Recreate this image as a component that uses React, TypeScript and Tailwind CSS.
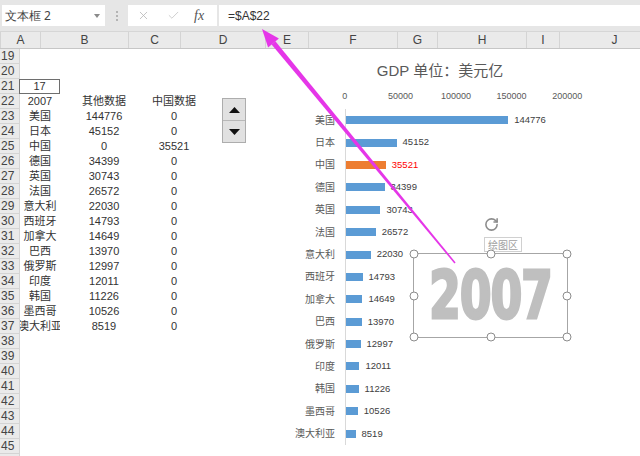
import { X, Check, RotateCw } from "lucide-react"

// column widths taken from the header separators
const cols = [
  { name: "A", w: "w-[40px]" },
  { name: "B", w: "w-[88px]" },
  { name: "C", w: "w-[52px]" },
  { name: "D", w: "w-[85px]" },
  { name: "E", w: "w-[43px]" },
  { name: "F", w: "w-[89px]" },
  { name: "G", w: "w-[40px]" },
  { name: "H", w: "w-[89px]" },
  { name: "I", w: "w-[33px]" },
  { name: "J", w: "w-[110px]" },
]

const gdp: [string, number, number][] = [
  ["美国", 144776, 0],
  ["日本", 45152, 0],
  ["中国", 0, 35521],
  ["德国", 34399, 0],
  ["英国", 30743, 0],
  ["法国", 26572, 0],
  ["意大利", 22030, 0],
  ["西班牙", 14793, 0],
  ["加拿大", 14649, 0],
  ["巴西", 13970, 0],
  ["俄罗斯", 12997, 0],
  ["印度", 12011, 0],
  ["韩国", 11226, 0],
  ["墨西哥", 10526, 0],
  ["澳大利亚", 8519, 0],
]

type Row = { n: number; a?: string; b?: string; c?: string; boxed?: boolean }

const rows: Row[] = []
for (let n = 19; n <= 46; n++) {
  if (n === 21) rows.push({ n, a: "17", boxed: true })
  else if (n === 22) rows.push({ n, a: "2007", b: "其他数据", c: "中国数据" })
  else if (n >= 23 && n <= 37) {
    const [name, other, cn] = gdp[n - 23]
    rows.push({ n, a: name, b: String(other), c: String(cn) })
  } else rows.push({ n })
}

function Toolbar() {
  return (
    <div className="flex h-[32px] items-center bg-[#e6e6e6] pl-[2px] border-b border-[#d6d6d6]">
      <div className="flex h-[21px] w-[103px] items-center bg-white pl-[3px] pr-[5px] text-[12px] text-[#444]">
        <span className="flex-1">文本框 2</span>
        <svg width="6" height="4" viewBox="0 0 6 4">
          <path d="M0 0 L6 0 L3 4 Z" fill="#8a8a8a" />
        </svg>
      </div>
      <div className="flex w-[23px] flex-col items-center gap-[2px]">
        <span className="h-[2px] w-[2px] bg-[#b4b4b4]" />
        <span className="h-[2px] w-[2px] bg-[#b4b4b4]" />
        <span className="h-[2px] w-[2px] bg-[#b4b4b4]" />
      </div>
      <div className="flex h-[21px] w-[89px] items-center bg-white">
        <X className="ml-[9px] h-[13px] w-[13px] text-[#b8b8b8]" strokeWidth={1.5} />
        <Check className="ml-[17px] h-[13px] w-[13px] text-[#c4c4c4]" strokeWidth={1.5} />
        <span className="ml-[14px] font-['Liberation_Serif',serif] text-[14px] italic text-[#555]">fx</span>
      </div>
      <div className="ml-[2px] flex h-[21px] flex-1 items-center bg-white pl-[9px] font-['Liberation_Sans',sans-serif] text-[12px] text-[#333]">
        =$A$22
      </div>
    </div>
  )
}

function Grid() {
  return (
    <div className="font-['Liberation_Sans','Noto_Sans_CJK_SC',sans-serif] text-[#333]">
      <div className="flex h-[17px] bg-[#eaeaea] border-b border-[#c6c6c6]">
        <div className="relative w-[20px] border-r border-[#d4d4d4]">
          <svg className="absolute bottom-[2px] right-[3px]" width="11" height="11" viewBox="0 0 11 11">
            <path d="M11 0 L11 11 L0 11 Z" fill="#bdbdbd" />
          </svg>
        </div>
        {cols.map((c) => (
          <div
            key={c.name}
            className={`${c.w} shrink-0 flex items-center justify-center border-r border-[#d4d4d4] text-[12px] text-[#444]`}
          >
            {c.name}
          </div>
        ))}
      </div>
      {rows.map((r) => (
        <div key={r.n} className="flex h-[15px]">
          <div className="w-[20px] shrink-0 bg-[#eaeaea] border-r border-b border-[#d4d4d4] pl-[1px] text-[12px] leading-[14px] text-[#444]">
            {r.n}
          </div>
          <div
            className={`w-[40px] shrink-0 overflow-hidden flex items-center justify-center whitespace-nowrap text-[11px] ${
              r.boxed ? "border border-[#6e6e6e] -ml-[1px] w-[41px]" : ""
            }`}
          >
            {r.a}
          </div>
          <div className="w-[88px] shrink-0 flex items-center justify-center text-[11px]">{r.b}</div>
          <div className="w-[52px] shrink-0 flex items-center justify-center text-[11px]">{r.c}</div>
          <div className="flex-1" />
        </div>
      ))}
    </div>
  )
}

function SpinButton() {
  return (
    <div className="absolute left-[222px] top-[98px] flex h-[45px] w-[24px] flex-col border border-[#adadad] bg-[#e1e1e1]">
      <div className="flex flex-1 items-center justify-center border-b border-[#b8b8b8]">
        <svg width="11" height="6" viewBox="0 0 11 6">
          <path d="M0 6 L5.5 0 L11 6 Z" fill="#111" />
        </svg>
      </div>
      <div className="flex flex-1 items-center justify-center">
        <svg width="11" height="6" viewBox="0 0 11 6">
          <path d="M0 0 L11 0 L5.5 6 Z" fill="#111" />
        </svg>
      </div>
    </div>
  )
}

function Chart() {
  const scale = 56 / 50000
  return (
    <div className="absolute left-[285px] top-[60px] w-[310px] font-['Liberation_Sans','Noto_Sans_CJK_SC',sans-serif]">
      <div className="h-[22px] text-center text-[15px] leading-[22px] text-[#595959]">GDP 单位：美元亿</div>
      <div className="mt-[8px] ml-[32px] flex h-[12px] text-[9px] leading-[12px] text-[#595959]">
        {["0", "50000", "100000", "150000", "200000"].map((t) => (
          <div key={t} className="w-[56px] text-center">
            {t}
          </div>
        ))}
      </div>
      <div className="mt-[7px] flex">
        <div className="w-[60px] shrink-0 pr-[10px]">
          {gdp.map(([name]) => (
            <div key={name} className="flex h-[22.4px] items-center justify-end whitespace-nowrap text-[10px] text-[#595959]">
              {name}
            </div>
          ))}
        </div>
        <div className="flex-1 border-l border-[#d9d9d9]">
          {gdp.map(([name, other, cn]) => {
            const v = other || cn
            const china = cn > 0
            return (
              <div key={name} className="flex h-[22.4px] items-center">
                <div
                  className={`h-[8px] ${china ? "bg-[#ed7d31]" : "bg-[#5b9bd5]"}`}
                  style={{ width: `${v * scale}px` }}
                />
                <span className={`ml-[6px] text-[9.5px] ${china ? "text-[#ff0000]" : "text-[#404040]"}`}>{v}</span>
              </div>
            )
          })}
        </div>
      </div>
    </div>
  )
}

function Handle({ className }: { className: string }) {
  return (
    <span
      className={`absolute h-[9px] w-[9px] -translate-x-1/2 -translate-y-1/2 rounded-full border-[1.5px] border-[#8c8c8c] bg-white ${className}`}
    />
  )
}

function TextBox() {
  return (
    <>
      <RotateCw className="absolute left-[484px] top-[217px] h-[15px] w-[15px] text-[#8c8c8c]" strokeWidth={2.5} />
      <div className="absolute left-[484px] top-[237px] flex h-[15px] w-[38px] items-center justify-center border border-[#d0d0d0] bg-white font-['Noto_Sans_CJK_SC',sans-serif] text-[10px] text-[#a0a0a0]">
        绘图区
      </div>
      <div className="absolute left-[413px] top-[253px] flex h-[85px] w-[155px] items-center justify-center border border-[#a6a6a6]">
        <span className="scale-x-[0.76] font-['Liberation_Sans_Narrow','DejaVu_Sans_Condensed',sans-serif] text-[66px] font-bold leading-none tracking-[-1px] text-[#bfbfbf] [-webkit-text-stroke:3px_#bfbfbf]">
          2007
        </span>
        <Handle className="left-0 top-0" />
        <Handle className="left-1/2 top-0" />
        <Handle className="left-full top-0" />
        <Handle className="left-0 top-1/2" />
        <Handle className="left-full top-1/2" />
        <Handle className="left-0 top-full" />
        <Handle className="left-1/2 top-full" />
        <Handle className="left-full top-full" />
      </div>
    </>
  )
}

function Arrow() {
  return (
    <svg className="pointer-events-none absolute left-0 top-0" width="640" height="456" viewBox="0 0 640 456">
      <polygon points="262,29 268.1,47.4 278.9,38.4" fill="#e536e8" />
      <polygon points="271.6,44.5 275.4,41.3 455.6,262.5 454.4,263.5" fill="#e536e8" />
    </svg>
  )
}

export default function App() {
  return (
    <div className="relative h-[456px] w-[640px] overflow-hidden bg-white">
      <Toolbar />
      <Grid />
      <SpinButton />
      <Chart />
      <TextBox />
      <Arrow />
    </div>
  )
}
